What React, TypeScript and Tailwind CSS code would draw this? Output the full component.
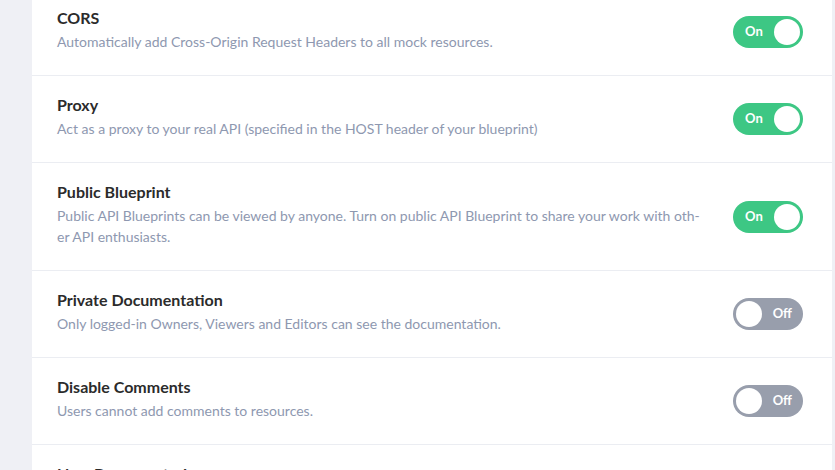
import { useState } from 'react';

interface Setting {
  id: string;
  title: string;
  description: React.ReactNode;
  enabled: boolean;
}

const initialSettings: Setting[] = [
  {
    id: 'cors',
    title: 'CORS',
    description: 'Automatically add Cross-Origin Request Headers to all mock resources.',
    enabled: true
  },
  {
    id: 'proxy',
    title: 'Proxy',
    description: 'Act as a proxy to your real API (specified in the HOST header of your blueprint)',
    enabled: true
  },
  {
    id: 'public',
    title: 'Public Blueprint',
    description: (
      <>
        Public API Blueprints can be viewed by anyone. Turn on public API Blueprint to share your work with oth-
        <br />
        er API enthusiasts.
      </>
    ),
    enabled: true
  },
  {
    id: 'private-docs',
    title: 'Private Documentation',
    description: 'Only logged-in Owners, Viewers and Editors can see the documentation.',
    enabled: false
  },
  {
    id: 'comments',
    title: 'Disable Comments',
    description: 'Users cannot add comments to resources.',
    enabled: false
  },
  {
    id: 'new-docs',
    title: 'New Documentation',
    description: 'Use the new documentation for this API.',
    enabled: false
  }
];

function Toggle({ on, onChange }: { on: boolean; onChange: () => void }) {
  return (
    <button
      onClick={onChange}
      className={`relative flex h-[32px] w-[70px] shrink-0 items-center rounded-full ${
        on ? 'bg-[#3dc784]' : 'bg-[#989eac]'
      }`}
    >
      {on ? (
        <>
          <span className="ml-[12px] text-[13px] font-bold text-white">On</span>
          <span className="ml-auto mr-[3px] h-[26px] w-[26px] rounded-full bg-white" />
        </>
      ) : (
        <>
          <span className="ml-[3px] h-[26px] w-[26px] rounded-full bg-white" />
          <span className="ml-auto mr-[11px] text-[13px] font-bold text-white">Off</span>
        </>
      )}
    </button>
  );
}

export default function App() {
  const [settings, setSettings] = useState(initialSettings);

  const toggle = (id: string) =>
    setSettings((prev) => prev.map((s) => (s.id === id ? { ...s, enabled: !s.enabled } : s)));

  return (
    <div
      className="flex h-[470px] w-[835px] overflow-hidden bg-[#eff0f5]"
      style={{ fontFamily: 'Lato, "Open Sans", sans-serif' }}
    >
      <div className="ml-[32px] mr-[3px] flex-1 bg-white">
        <div className="-mt-[11px]">
          {settings.map((s) => (
            <div
              key={s.id}
              className="flex items-center border-b border-[#ebedf2] pl-[25px] pr-[29px]"
            >
              <div className="flex-1 pt-[19px] pb-[23px]">
                <div className="text-[16px] font-bold leading-[20px] text-[#2b2b2b]">{s.title}</div>
                <div className="mt-[3px] text-[14px] leading-[21px] text-[#8e98b0]">{s.description}</div>
              </div>
              <Toggle on={s.enabled} onChange={() => toggle(s.id)} />
            </div>
          ))}
        </div>
      </div>
    </div>
  );
}
